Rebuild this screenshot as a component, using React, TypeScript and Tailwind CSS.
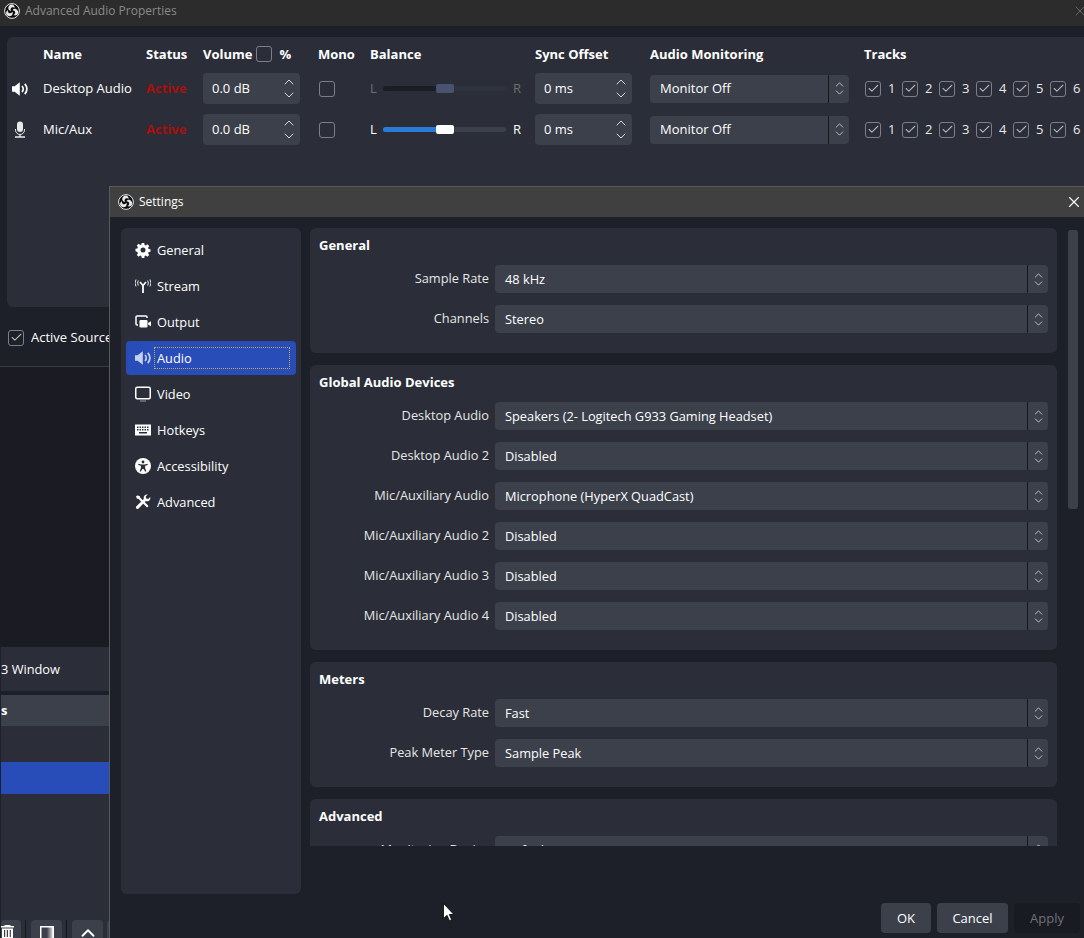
import React from 'react';
import { ChevronUp, ChevronDown, Check, X } from 'lucide-react';

const font = 'font-["Open_Sans","Liberation_Sans",sans-serif]';

const logoBlade = 'M8 1.4C5.6 1.4 4 3.4 4.3 5.6 4.6 7 5.8 7.8 7 8 6.2 6.6 6.6 4.7 8.3 4.2 9.3 4 10.1 4.2 10.9 4.8 10.4 2.9 9.5 1.5 8 1.4z';

function ObsLogo({ size = 16 }: { size?: number }) {
  return (
    <svg width={size} height={size} viewBox="0 0 16 16" className="shrink-0">
      <circle cx="8" cy="8" r="7.4" fill="#0d0d0d" stroke="#e8e8e8" strokeWidth="1" />
      <path d={logoBlade} fill="#e8e8e8" />
      <path d={logoBlade} fill="#e8e8e8" transform="rotate(120 8 8)" />
      <path d={logoBlade} fill="#e8e8e8" transform="rotate(240 8 8)" />
    </svg>
  );
}

function Box({ checked }: { checked?: boolean }) {
  return (
    <span className="w-4 h-4 shrink-0 rounded-[3px] border-[1.5px] border-[#7c7f86] flex items-center justify-center">
      {checked && <Check size={13} strokeWidth={2} className="text-[#b0b2b6]" />}
    </span>
  );
}

function SpeakerIcon({ color = '#fff', size = 16 }: { color?: string; size?: number }) {
  return (
    <svg width={size} height={size} viewBox="0 0 16 16" fill="none" className="shrink-0">
      <path d="M0 5.2h2.6L7.8 1.2v13.6L2.6 10.8H0z" fill={color} />
      <path d="M10 5a4.4 4.4 0 0 1 0 6" stroke={color} strokeWidth="1.8" />
      <path d="M12.8 2.8a7.6 7.6 0 0 1 0 10.4" stroke={color} strokeWidth="1.8" />
    </svg>
  );
}

function MicIcon() {
  return (
    <svg width="16" height="17" viewBox="0 0 16 17" fill="none" className="shrink-0">
      <rect x="5" y="0.5" width="6" height="10.5" rx="3" fill="#e8e8ea" />
      <path d="M3.5 8v1a4.5 4.5 0 0 0 9 0V8" stroke="#e8e8ea" strokeWidth="1" />
      <path d="M8 13.5v2M3 16h10" stroke="#e8e8ea" strokeWidth="1.4" />
    </svg>
  );
}

function Spin({ value }: { value: string }) {
  return (
    <div className="w-[97px] h-[31px] rounded bg-[#3c404b] flex items-center pl-[9px] pr-[3px] text-[13px] text-white">
      <span className="flex-1">{value}</span>
      <span className="flex flex-col items-center text-[#e2e2e4] -space-y-[3px]">
        <ChevronUp size={16} strokeWidth={1.4} />
        <ChevronDown size={16} strokeWidth={1.4} />
      </span>
    </div>
  );
}

function Select({ value, className }: { value: string; className: string }) {
  return (
    <div className={`${className} h-7 rounded bg-[#3c404b] flex items-stretch text-white`}>
      <span className="flex-1 pl-[10px] pt-[1px] flex items-center">{value}</span>
      <span className="w-[21px] border-l border-[#16171c] flex flex-col items-center justify-center text-[#d8d8da] -space-y-[5px]">
        <ChevronUp size={13} strokeWidth={1.5} />
        <ChevronDown size={13} strokeWidth={1.5} />
      </span>
    </div>
  );
}

function Balance({ active }: { active?: boolean }) {
  return (
    <div className={`flex items-center w-[151px] text-[13px] ${active ? 'text-white' : 'text-[#6f6f6f]'}`}>
      <span className="w-[13px]">L</span>
      <div className={`relative w-[123px] h-[5px] rounded-full ${active ? 'bg-[#3c404b]' : 'bg-[#2f3340]'}`}>
        <div className={`h-full w-[53px] rounded-l-full ${active ? 'bg-[#2a7bd8]' : 'bg-[#1b1d24]'}`} />
        <div className={`absolute left-[53px] -top-[2px] w-[18px] h-[9px] rounded-[2px] ${active ? 'bg-white' : 'bg-[#4a5272]'}`} />
      </div>
      <span className="ml-[7px]">R</span>
    </div>
  );
}

function Tracks() {
  return (
    <div className="flex items-center gap-[7px] pl-px text-[13px] text-[#e8e8e8]">
      {[1, 2, 3, 4, 5, 6].map((n) => (
        <span key={n} className="flex items-center gap-[7px] w-[30px]">
          <Box checked />
          {n}
        </span>
      ))}
    </div>
  );
}

function AudioRow({ icon, name, active }: { icon: React.ReactNode; name: string; active?: boolean }) {
  return (
    <>
      <div className="flex items-center justify-center pr-[11px]">{icon}</div>
      <div className="flex items-center pt-[1px] text-[13px] text-white">{name}</div>
      <div className="flex items-center text-[13px] font-bold text-[#a80f0f]">Active</div>
      <div><Spin value="0.0 dB" /></div>
      <div className="flex items-center pl-px"><Box /></div>
      <div className="flex items-center"><Balance active={active} /></div>
      <div><Spin value="0 ms" /></div>
      <div className="flex items-center"><Select value="Monitor Off" className="w-[199px] text-[13px]" /></div>
      <div className="flex items-center"><Tracks /></div>
    </>
  );
}

function AudioWindow() {
  const head = 'h-5 text-[13px] font-bold text-white leading-5';
  return (
    <div className="h-[307px] shrink-0 flex flex-col">
      <div className="h-[26px] shrink-0 bg-[#2c2c2c] flex items-center pl-1 pb-[5px] gap-[5px] text-[12px] text-[#8a8a8a]">
        <ObsLogo />
        <span className="flex-1">Advanced Audio Properties</span>
        <X size={16} strokeWidth={1.2} className="text-[#777] -mr-[4px]" />
      </div>
      <div className="mt-[11px] ml-[7px] flex-1 bg-[#2b2e38] rounded-tl-md rounded-bl-md pt-[7px]">
        <div className="grid grid-cols-[36px_103px_57px_115px_52px_165px_115px_214px_1fr] grid-rows-[19px_31px_31px] gap-y-[10px]">
          <div />
          <div className={head}>Name</div>
          <div className={head}>Status</div>
          <div className={`${head} flex items-center gap-[4px]`}>
            Volume <Box /> <span className="ml-[3px]">%</span>
          </div>
          <div className={head}>Mono</div>
          <div className={head}>Balance</div>
          <div className={head}>Sync Offset</div>
          <div className={head}>Audio Monitoring</div>
          <div className={head}>Tracks</div>
          <AudioRow icon={<SpeakerIcon />} name="Desktop Audio" />
          <AudioRow icon={<MicIcon />} name="Mic/Aux" active />
        </div>
      </div>
    </div>
  );
}

function MainWindow() {
  return (
    <div className="flex-1 flex flex-col min-h-0">
      <div className="h-[60px] shrink-0 flex items-center gap-[7px] pl-2 pt-[2px] text-[13px] text-white border-b border-[#3a3b41] whitespace-nowrap">
        <Box checked />
        Active Sources
      </div>
      <div className="h-[280px] shrink-0 bg-[#1a1b23]" />
      <div className="h-[44px] shrink-0 ml-px pt-[1px] bg-[#2b2e38] flex items-center text-[12.8px] text-white">3 Window</div>
      <div className="h-[4px] shrink-0" />
      <div className="h-[31px] shrink-0 ml-px bg-[#3c404b] flex items-center text-[13px] font-bold text-white">s</div>
      <div className="flex-1 ml-px bg-[#2b2e38] flex flex-col pt-[36px]">
        <div className="h-[32px] bg-[#284cb8]" />
        <div className="mt-auto flex items-start h-[18px] gap-[4px]">
          <div className="w-[20px] h-[18px] rounded-t bg-[#3c404b] pt-[5px]">
            <svg width="13" height="13" viewBox="0 0 13 13" fill="#fff"><path d="M0 1h13v1.5H0zM3.5 0h6v1h-6zM1 3.5h11V13H1zM3 5v7h1.2V5zm2.8 0v7H7V5zm2.9 0v7h1.2V5z" fillRule="evenodd" /></svg>
          </div>
          <span className="w-px h-[18px] bg-[#16171c]" />
          <div className="ml-[1px] w-[31px] h-[18px] rounded-t bg-[#3c404b] flex justify-center pt-[6px]">
            <svg width="14" height="12" viewBox="0 0 14 12">
              <defs>
                <linearGradient id="filterFade" x1="0" x2="1" y1="0" y2="0">
                  <stop offset="0" stopColor="#3c404b" />
                  <stop offset="1" stopColor="#e8e8e8" />
                </linearGradient>
              </defs>
              <rect x="7" y="1" width="6" height="11" fill="url(#filterFade)" />
              <path d="M.75 12V.75h12.5V12" fill="none" stroke="#fff" strokeWidth="1.5" />
            </svg>
          </div>
          <span className="w-px h-[18px] bg-[#16171c]" />
          <div className="ml-[1px] w-[31px] h-[18px] rounded-t bg-[#3c404b] flex justify-center pt-[2px] text-white">
            <ChevronUp size={22} strokeWidth={2} />
          </div>
          <div className="w-[31px] h-[18px] shrink-0 rounded-t bg-[#3c404b]" />
        </div>
      </div>
    </div>
  );
}

const navItems: { label: string; icon: React.ReactNode }[] = [
  {
    label: 'General',
    icon: (
      <svg width="16" height="16" viewBox="0 0 16 16">
        <path fill="#fff" fillRule="evenodd" d="M6.7 1h2.6l.3 1.9 1.2.5 1.6-1.1 1.8 1.8-1.1 1.6.5 1.2 1.9.3v2.6l-1.9.3-.5 1.2 1.1 1.6-1.8 1.8-1.6-1.1-1.2.5-.3 1.9H6.7l-.3-1.9-1.2-.5-1.6 1.1-1.8-1.8 1.1-1.6-.5-1.2L.5 9.3V6.7l1.9-.3.5-1.2-1.1-1.6 1.8-1.8 1.6 1.1 1.2-.5zM8 5.5a2.5 2.5 0 1 0 0 5 2.5 2.5 0 0 0 0-5z" />
      </svg>
    ),
  },
  {
    label: 'Stream',
    icon: (
      <svg width="16" height="16" viewBox="0 0 16 16" fill="none" stroke="#fff">
        <path d="M7.1 7h1.8v8H7.1z" fill="#fff" stroke="none" />
        <path d="M5 4 8 7.5 11 4" strokeWidth="1.6" />
        <path d="M3.3 2.5a5 5 0 0 0 0 5M12.7 2.5a5 5 0 0 1 0 5M1 1.5a7 7 0 0 0 0 7M15 1.5a7 7 0 0 1 0 7" strokeWidth="0.9" />
      </svg>
    ),
  },
  {
    label: 'Output',
    icon: (
      <svg width="16" height="16" viewBox="0 0 16 16" fill="none">
        <path d="M3 11H2a1 1 0 0 1-1-1V3a1 1 0 0 1 1-1h9a1 1 0 0 1 1 1v1" stroke="#fff" strokeWidth="1.5" />
        <rect x="4.5" y="6" width="8" height="7.5" rx="1.2" fill="#fff" />
        <path d="M13 9l3-1.8v5L13 10.5z" fill="#fff" />
      </svg>
    ),
  },
  { label: 'Audio', icon: <SpeakerIcon color="#c4d0ee" /> },
  {
    label: 'Video',
    icon: (
      <svg width="16" height="16" viewBox="0 0 16 16" fill="none">
        <rect x="0.75" y="1.25" width="14.5" height="11.5" rx="1.5" stroke="#fff" strokeWidth="1.5" />
        <path d="M5 15h6" stroke="#9a9a9a" />
      </svg>
    ),
  },
  {
    label: 'Hotkeys',
    icon: (
      <svg width="16" height="16" viewBox="0 0 16 16">
        <path fill="#fff" fillRule="evenodd" d="M0 2.5h16v11H0zM2 4.5v1.5h1.5V4.5zm2.5 0v1.5H6V4.5zm2.5 0v1.5h1.5V4.5zm2.5 0v1.5H11V4.5zm2.5 0v1.5h1.5V4.5zM2 7v1.5h1.5V7zm2.5 0v1.5H6V7zM7 7v1.5h1.5V7zm2.5 0v1.5H11V7zM12 7v1.5h1.5V7zM4 10v1.5h8V10z" />
      </svg>
    ),
  },
  {
    label: 'Accessibility',
    icon: (
      <svg width="16" height="16" viewBox="0 0 16 16">
        <circle cx="8" cy="8" r="8" fill="#fff" />
        <circle cx="8" cy="4" r="1.4" fill="#2b2e38" />
        <path d="M3.5 5.8 6.3 6.6h3.4l2.8-.8.3 1.1-2.7.9v2.3l1.2 3.2-1 .4L8.6 11H7.4l-1.7 2.7-1-.4 1.2-3.2V7.8L3.2 6.9z" fill="#2b2e38" />
      </svg>
    ),
  },
  {
    label: 'Advanced',
    icon: (
      <svg width="16" height="16" viewBox="0 0 16 16" fill="#fff">
        <path d="M2 1.5 1 2.5l1 2.3h1.4L12 13.6l1.6-1.6L4.8 3.3V2z" />
        <path d="M12 .6a3.4 3.4 0 0 0-3.2 4.5L1.2 12.6a1.5 1.5 0 0 0 2.1 2.1l7.6-7.6A3.4 3.4 0 0 0 15.3 3l-2.1 2.1-2-.5-.5-2 2-2z" />
      </svg>
    ),
  },
];

function Sidebar() {
  return (
    <div className="w-[180px] h-[666px] shrink-0 rounded-md bg-[#2b2e38] px-[5px] pt-[5px] flex flex-col gap-[2px] text-[12.8px] text-white">
      {navItems.map((item) => {
        const active = item.label === 'Audio';
        return (
          <div key={item.label} className={`h-[34px] shrink-0 rounded pl-[9px] flex items-center gap-[6px] ${active ? 'bg-[#284cb8]' : ''}`}>
            {item.icon}
            {active ? (
              <span className="-ml-[3px] w-[136px] h-[22px] pl-[2px] pt-[1px] flex items-center border border-dotted border-[#c9a94e]">{item.label}</span>
            ) : (
              <span className="pt-[2px]">{item.label}</span>
            )}
          </div>
        );
      })}
    </div>
  );
}

function Row({ label, value }: { label: string; value: string }) {
  return (
    <div className="h-7 flex items-center gap-[6px] pr-[9px]">
      <span className="w-[179px] shrink-0 text-right text-[12.8px] text-[#e6e6e6] whitespace-nowrap">{label}</span>
      <Select value={value} className="flex-1 text-[12.8px]" />
    </div>
  );
}

function Group({ title, rows, height }: { title: string; rows: [string, string][]; height: string }) {
  return (
    <section className={`${height} shrink-0 rounded-md bg-[#2b2e38] pt-[7px]`}>
      <h3 className="h-5 pl-[9px] text-[13px] font-bold text-white leading-5">{title}</h3>
      <div className="mt-[10px] flex flex-col gap-3">
        {rows.map(([label, value]) => (
          <Row key={label} label={label} value={value} />
        ))}
      </div>
    </section>
  );
}

function SettingsWindow() {
  return (
    <div className="absolute left-[109px] top-[186px] w-[975px] h-[752px] flex flex-col bg-[#1e2029] border-l border-t border-[#5a5a5a]">
      <div className="h-[30px] shrink-0 bg-[#404040] flex items-center pl-[8px] pr-[1px] pb-[1px] gap-[5px] text-[12px] text-white">
        <ObsLogo />
        <span className="flex-1">Settings</span>
        <X size={18} strokeWidth={1.5} />
      </div>
      <div className="flex pl-[11px] pt-[11px]">
        <Sidebar />
        <div className="ml-[9px] w-[747px] h-[618px] overflow-hidden flex flex-col gap-3">
          <Group title="General" height="h-[125px]" rows={[['Sample Rate', '48 kHz'], ['Channels', 'Stereo']]} />
          <Group
            title="Global Audio Devices"
            height="h-[285px]"
            rows={[
              ['Desktop Audio', 'Speakers (2- Logitech G933 Gaming Headset)'],
              ['Desktop Audio 2', 'Disabled'],
              ['Mic/Auxiliary Audio', 'Microphone (HyperX QuadCast)'],
              ['Mic/Auxiliary Audio 2', 'Disabled'],
              ['Mic/Auxiliary Audio 3', 'Disabled'],
              ['Mic/Auxiliary Audio 4', 'Disabled'],
            ]}
          />
          <Group title="Meters" height="h-[125px]" rows={[['Decay Rate', 'Fast'], ['Peak Meter Type', 'Sample Peak']]} />
          <Group title="Advanced" height="h-[125px]" rows={[['Monitoring Device', 'Default']]} />
        </div>
        <div className="ml-[11px] mt-[2px] w-[10px] h-[279px] rounded-[3px] bg-[#3c404b]" />
      </div>
      <div className="absolute right-[4px] bottom-[5px] flex gap-[6px] text-[13px]">
        <button className="w-[50px] h-[30px] pt-[2px] rounded bg-[#3c404b] text-white">OK</button>
        <button className="w-[71px] h-[30px] pt-[2px] rounded bg-[#3c404b] text-white">Cancel</button>
        <button className="w-[66px] h-[30px] pt-[2px] rounded bg-[#191a22] text-[#70727a]">Apply</button>
      </div>
    </div>
  );
}

export default function App() {
  return (
    <div className={`relative w-[1084px] h-[938px] overflow-hidden bg-[#1e2029] flex flex-col ${font}`}>
      <AudioWindow />
      <MainWindow />
      <SettingsWindow />
      <svg width="12" height="19" viewBox="0 0 12 19" className="absolute left-[443px] top-[903px]">
        <path d="M0.5 0.5v15l3.5-3.2 2.4 5.4 2.3-1-2.4-5.2h4.6z" fill="#fff" stroke="#000" strokeWidth="0.8" />
      </svg>
    </div>
  );
}
